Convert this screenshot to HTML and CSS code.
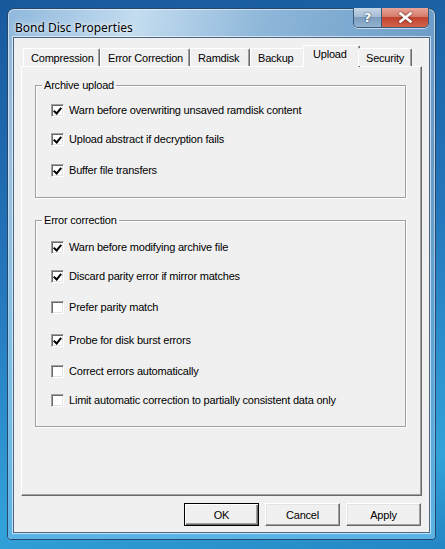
FILE: index.html
```html
<!DOCTYPE html>
<html lang="en">
<head>
    <meta charset="UTF-8">
    <title>Bond Disc Properties</title>
    <link rel="stylesheet" href="styles.css">
</head>
<body>
    <div class="window">
        <div class="titlebar">
            <span class="title">Bond Disc Properties</span>
            <div class="caption-buttons">
                <button class="cap help">?</button>
                <button class="cap close">
                    <svg width="13" height="11" viewBox="0 0 13 11">
                        <path d="M1.5 1.5 L11.5 9.5 M11.5 1.5 L1.5 9.5" stroke="#fff" stroke-width="2.6" stroke-linecap="square"/>
                    </svg>
                </button>
            </div>
        </div>
        <div class="client">
            <div class="tabs">
                <div class="tab">Compression</div>
                <div class="tab">Error Correction</div>
                <div class="tab">Ramdisk</div>
                <div class="tab">Backup</div>
                <div class="tab active">Upload</div>
                <div class="tab">Security</div>
            </div>
            <div class="panel">
                <fieldset class="group group-upload">
                    <legend>Archive upload</legend>
                    <label class="check"><span class="box checked"></span>Warn before overwriting unsaved ramdisk content</label>
                    <label class="check"><span class="box checked"></span>Upload abstract if decryption fails</label>
                    <label class="check"><span class="box checked"></span>Buffer file transfers</label>
                </fieldset>
                <fieldset class="group group-errors">
                    <legend>Error correction</legend>
                    <label class="check"><span class="box checked"></span>Warn before modifying archive file</label>
                    <label class="check"><span class="box checked"></span>Discard parity error if mirror matches</label>
                    <label class="check"><span class="box"></span>Prefer parity match</label>
                    <label class="check"><span class="box checked"></span>Probe for disk burst errors</label>
                    <label class="check"><span class="box"></span>Correct errors automatically</label>
                    <label class="check"><span class="box"></span>Limit automatic correction to partially consistent data only</label>
                </fieldset>
            </div>
            <div class="buttons">
                <button class="btn default">OK</button>
                <button class="btn">Cancel</button>
                <button class="btn">Apply</button>
            </div>
        </div>
    </div>
</body>
</html>
```

FILE: styles.css
```css
html, body {
    margin: 0;
    height: 100%;
}

body {
    background: linear-gradient(170deg, #18599c 0%, #2576bc 45%, #32a2da 85%, #2386c4 100%);
    font-family: 'Liberation Sans', Arial, sans-serif;
    font-size: 11px;
    letter-spacing: -0.2px;
    color: #000;
    overflow: hidden;
}

.window {
    position: relative;
    margin: 8px 0 0 7px;
    width: 429px;
    height: 532px;
    box-sizing: border-box;
    border: 1px solid #26476a;
    border-radius: 7px 7px 4px 4px;
    background: linear-gradient(100deg, #8fb8dc 0%, #c3dcef 25%, #8db6d9 50%, #6f9fc9 80%, #5f93c2 100%);
    box-shadow: inset 0 0 0 1px rgba(255, 255, 255, 0.55);
}

.window::after {
    content: "";
    position: absolute;
    left: 0;
    right: 0;
    bottom: 0;
    height: 380px;
    border-radius: 0 0 4px 4px;
    background: linear-gradient(180deg, rgba(90, 170, 225, 0) 0%, #5ab3e6 100%);
    pointer-events: none;
    z-index: 0;
}

.titlebar {
    display: flex;
    align-items: flex-start;
    height: 28px;
    padding-left: 7px;
    position: relative;
    z-index: 1;
}

.title {
    font-family: 'Noto Sans', 'Open Sans', sans-serif;
    font-size: 12px;
    letter-spacing: 0;
    line-height: 14px;
    margin-top: 12px;
    color: #000;
    text-shadow: 0 0 8px rgba(255, 255, 255, 0.9), 0 0 3px rgba(255, 255, 255, 0.9);
}

.caption-buttons {
    display: flex;
    margin-left: auto;
    margin-right: 6px;
    margin-top: -1px;
    border: 1px solid #3a5a7c;
    border-top: none;
    border-radius: 0 0 5px 5px;
    overflow: hidden;
    box-shadow: 0 1px 0 rgba(255, 255, 255, 0.6);
}

.cap {
    border: none;
    padding: 0;
    height: 19px;
    display: flex;
    align-items: center;
    justify-content: center;
    color: #fff;
}

.help {
    width: 28px;
    background: linear-gradient(180deg, #c6d6e6 0%, #a6bdd4 45%, #7d9cbc 50%, #92b3d2 100%);
    border-right: 1px solid #3a5a7c;
    font-family: 'DejaVu Sans', sans-serif;
    font-weight: bold;
    font-size: 13px;
    text-shadow: 0 0 2px #36506c, 0 0 1px #36506c;
}

.close {
    width: 46px;
    background: linear-gradient(180deg, #e8a597 0%, #d67c6c 45%, #c2432f 50%, #d2634b 100%);
}

.close svg {
    filter: drop-shadow(0 0 1px #5c1a10);
}

.client {
    position: relative;
    z-index: 1;
    margin-left: 5px;
    width: 417px;
    height: 496px;
    box-sizing: border-box;
    border: 1px solid #4b6784;
    background: #f0f0f0;
    padding: 7px 7px 0 7px;
    box-shadow: 0 0 0 1px rgba(255, 255, 255, 0.6);
}

.tabs {
    display: flex;
    align-items: flex-end;
    height: 21px;
    padding-left: 2px;
    position: relative;
    z-index: 2;
}

.tab {
    height: 18px;
    box-sizing: border-box;
    padding: 3px 6px 0 7px;
    border-left: 1px solid #fff;
    border-top: 1px solid #fff;
    border-right: 1px solid #696969;
    border-radius: 2px 2px 0 0;
    box-shadow: inset -1px 0 0 #a0a0a0;
    background: #f0f0f0;
    line-height: 13px;
    white-space: nowrap;
}

.tab:nth-child(1) { width: 77px; }
.tab:nth-child(2) { width: 90px; }
.tab:nth-child(3) { width: 60px; }
.tab:nth-child(4) { width: 55px; }
.tab:nth-child(5) { width: 53px; }
.tab:nth-child(6) { width: 54px; }

.tab.active {
    height: 22px;
    margin: 0 -2px -1px -2px;
    padding-top: 2px;
    padding-left: 9px;
    width: 57px;
}

.panel {
    height: 430px;
    box-sizing: border-box;
    border-left: 1px solid #fff;
    border-top: 1px solid #fff;
    border-right: 1px solid #696969;
    border-bottom: 1px solid #696969;
    box-shadow: inset -1px -1px 0 #a0a0a0;
    padding: 11px 15px 0 13px;
}

.group {
    box-sizing: border-box;
    margin: 0;
    border: 1px solid #a0a0a0;
    box-shadow: 1px 1px 0 #fff, inset 1px 1px 0 #fff;
    padding: 0;
    display: flex;
    flex-direction: column;
}

.group legend {
    padding: 0 2px;
    margin-left: 6px;
    line-height: 14px;
}

.group-upload {
    height: 120px;
    padding-top: 12px;
}

.group-errors {
    height: 214px;
    margin-top: 15px;
    padding-top: 14px;
}

.check {
    display: flex;
    align-items: center;
    height: 13px;
    gap: 5px;
    margin-left: 15px;
    line-height: 13px;
    white-space: nowrap;
}

.check + .check {
    margin-top: 16px;
}

.group-upload .check:nth-of-type(3) { margin-top: 18px; }
.group-errors .check:nth-of-type(3) { margin-top: 18px; }
.group-errors .check:nth-of-type(4) { margin-top: 20px; }
.group-errors .check:nth-of-type(5) { margin-top: 18px; }

.box {
    width: 13px;
    height: 13px;
    box-sizing: border-box;
    flex: none;
    background: #fff;
    border-top: 1px solid #a0a0a0;
    border-left: 1px solid #a0a0a0;
    border-right: 1px solid #fff;
    border-bottom: 1px solid #fff;
    box-shadow: inset 1px 1px 0 #696969, inset -1px -1px 0 #e3e3e3;
    position: relative;
}

.box.checked::after {
    content: "";
    position: absolute;
    left: 3px;
    top: 1px;
    width: 3px;
    height: 6px;
    border-right: 2px solid #000;
    border-bottom: 2px solid #000;
    transform: rotate(40deg);
}

.buttons {
    display: flex;
    justify-content: flex-end;
    gap: 6px;
    margin-top: 7px;
    padding-right: 1px;
}

.btn {
    width: 75px;
    height: 23px;
    box-sizing: border-box;
    font-family: 'Liberation Sans', Arial, sans-serif;
    font-size: 11px;
    letter-spacing: -0.2px;
    color: #000;
    background: #f0f0f0;
    border-left: 1px solid #fff;
    border-top: 1px solid #fff;
    border-right: 1px solid #696969;
    border-bottom: 1px solid #696969;
    box-shadow: inset -1px -1px 0 #a0a0a0, inset 1px 1px 0 #e3e3e3;
    padding: 0;
}

.btn.default {
    border: 1px solid #000;
    box-shadow: inset 1px 1px 0 #fff, inset -1px -1px 0 #696969, inset -2px -2px 0 #a0a0a0;
}
```
